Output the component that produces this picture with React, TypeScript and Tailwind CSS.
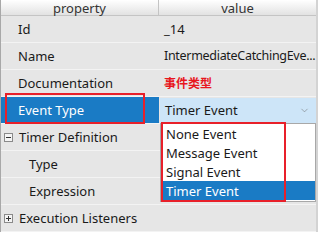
import { ChevronDown } from 'lucide-react';

type Row = {
  label: string;
  value?: string;
  indent?: boolean;
  toggle?: 'minus' | 'plus';
  kind?: 'note' | 'selected' | 'tight';
};

const rows: Row[] = [
  { label: 'Id', value: '_14' },
  { label: 'Name', value: 'IntermediateCatchingEve...', kind: 'tight' },
  { label: 'Documentation', value: '事件类型', kind: 'note' },
  { label: 'Event Type', value: 'Timer Event', kind: 'selected' },
  { label: 'Timer Definition', toggle: 'minus' },
  { label: 'Type', indent: true },
  { label: 'Expression', indent: true },
  { label: 'Execution Listeners', toggle: 'plus' },
];

const options = ['None Event', 'Message Event', 'Signal Event', 'Timer Event'];

function Toggle({ type }: { type: 'minus' | 'plus' }) {
  return (
    <span className="relative mr-[6px] ml-[3px] flex h-[9px] w-[9px] items-center justify-center border border-[#8a8a8a] bg-[#f4f4f4]">
      <span className="absolute h-px w-[5px] bg-[#333]" />
      {type === 'plus' ? <span className="absolute h-[5px] w-px bg-[#333]" /> : null}
    </span>
  );
}

function PropertyRow({ row }: { row: Row }) {
  const selected = row.kind === 'selected';
  return (
    <div className="grid h-[27px] grid-cols-[158px_1fr] border-b border-[#f3f3f3]">
      <div
        className={`flex items-center ${selected ? 'bg-[#1a7bc5] text-white' : 'text-[#1a1a1a]'} ${
          row.toggle ? 'pl-0' : row.indent ? 'pl-[28px]' : 'pl-[17px]'
        }`}
      >
        {row.toggle ? <Toggle type={row.toggle} /> : null}
        {row.label}
      </div>
      <div className="flex min-w-0 items-center">
        {selected ? (
          <div className="ml-px flex h-[25px] w-full items-center justify-between bg-[#cde5f8] pl-[5px] pr-[6px] text-[#1a1a1a]">
            <span>{row.value}</span>
            <ChevronDown size={11} strokeWidth={1.1} className="text-[#666]" />
          </div>
        ) : row.kind === 'note' ? (
          <span className="pl-[5px] font-['Noto_Sans_CJK_SC',sans-serif] text-[12px] font-bold text-[#e8171e]">
            {row.value}
          </span>
        ) : (
          <span
            className={`pl-[5px] whitespace-nowrap text-[#1a1a1a] ${row.kind === 'tight' ? 'text-[12.5px] tracking-[-0.3px]' : ''}`}
          >
            {row.value}
          </span>
        )}
      </div>
    </div>
  );
}

export default function App() {
  return (
    <div className="relative h-[242px] w-[319px] overflow-hidden bg-white font-['Noto_Sans','Noto_Sans_CJK_SC',sans-serif] text-[13px] leading-[16px]">
      <div className="w-[318px] border-r-2 border-l border-r-[#d3d3d3] border-l-[#a8a8a8]">
        <div className="grid h-[16px] grid-cols-[158px_1fr] border-b border-[#c4c4c4] bg-gradient-to-b from-white to-[#e2e2e2] text-[#333]">
          <div className="flex items-center justify-center border-r border-[#c4c4c4] leading-[14px]">property</div>
          <div className="flex items-center justify-center leading-[14px]">value</div>
        </div>
        <div className="bg-[#e6e6e6]">
          {rows.map((row) => (
            <PropertyRow key={row.label} row={row} />
          ))}
        </div>
      </div>

      <div className="absolute top-[123px] left-[160px] h-[79px] w-[156px] border border-[#a8a8a8] bg-white text-[#1a1a1a]">
        {options.map((opt) => (
          <div
            key={opt}
            className={`flex h-[19px] items-center pl-[5px] ${opt === 'Timer Event' ? 'bg-[#1a7bc5] text-white' : ''}`}
          >
            {opt}
          </div>
        ))}
      </div>

      <div className="absolute top-[93px] left-[5px] h-[31px] w-[140px] border-2 border-[#e8202a]" />
      <div className="absolute top-[122px] left-[161px] h-[80px] w-[125px] border-2 border-[#e8202a]" />
    </div>
  );
}
